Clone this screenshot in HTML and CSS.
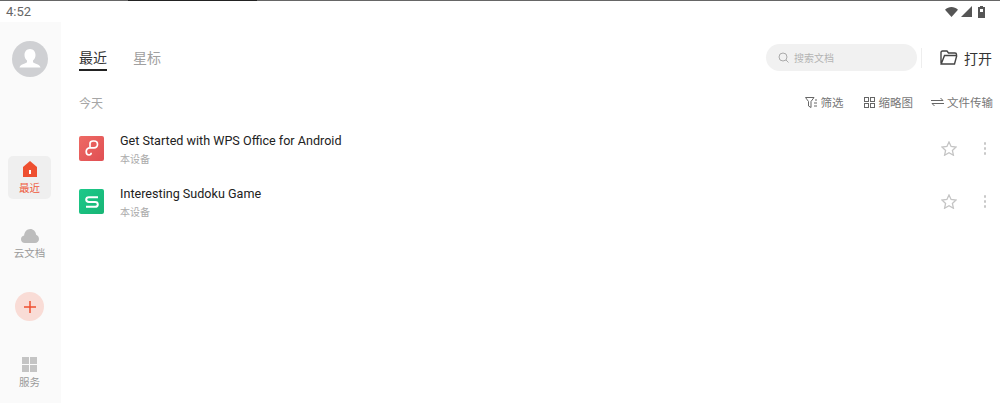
FILE: index.html
```html
<!DOCTYPE html>
<html lang="zh-CN">
<head>
    <meta charset="UTF-8">
    <meta name="viewport" content="width=device-width, initial-scale=1.0">
    <title>WPS Office</title>
    <link rel="stylesheet" href="styles.css">
</head>
<body>
    <div class="statusbar">
        <span class="clock">4:52</span>
        <div class="status-icons">
            <svg width="13" height="10" viewBox="0 0 13 10"><path d="M0 2.800C3.800 -.8 9.200 -.8 13 2.800L6.500 10Z" fill="#555"/></svg>
            <svg class="signal" width="11" height="11" viewBox="0 0 11 11"><path d="M11 0V11H0Z" fill="#555"/></svg>
            <svg width="7" height="12" viewBox="0 0 7 12"><path d="M2 0H5V1H7V12H0V1H2Z" fill="#555"/><rect x="2" y="3" width="3" height="3" fill="#fff"/></svg>
        </div>
    </div>
    <div class="app">
        <div class="sidebar">
            <div class="avatar">
                <svg width="36" height="36" viewBox="0 0 36 36"><circle cx="18" cy="18" r="18" fill="#cfd0d3"/><path d="M18 8c3.600 0 5.500 2.800 5.500 6 0 2.500-1 4.500-2.500 5.600v1.600c1.500 1.400 7 2 7.500 5.300H7.500c.5-3.300 6-3.900 7.500-5.300v-1.600c-1.500-1.100-2.500-3.100-2.500-5.600 0-3.200 1.900-6 5.500-6z" fill="#fff"/></svg>
            </div>
            <div class="nav-item active">
                <svg width="16" height="16" viewBox="0 0 16 16"><path d="M8 0L15 6V16H1V6Z" fill="#ee4f30"/><rect x="7" y="9" width="2" height="4" fill="#fff"/></svg>
                <span>最近</span>
            </div>
            <div class="nav-item cloud">
                <svg width="18" height="14" viewBox="0 0 18 14"><path d="M4 14C1.500 14 0 12.300 0 10.200 0 8.200 1.300 6.800 3.100 6.500 3.400 2.800 6 0 9.300 0c3 0 5.400 2.300 5.800 5.700 1.700.6 2.900 2.300 2.900 4.300 0 2.300-1.600 4-4 4z" fill="#bdbdbd"/></svg>
                <span>云文档</span>
            </div>
            <div class="add-btn">
                <svg width="14" height="14" viewBox="0 0 14 14"><path d="M7 1V13M1 7H13" stroke="#ee4f30" stroke-width="1.500"/></svg>
            </div>
            <div class="nav-item services">
                <svg width="15" height="15" viewBox="0 0 15 15"><g fill="#c4c4c4"><rect width="7" height="7"/><rect x="8" width="7" height="7"/><rect y="8" width="7" height="7"/><rect x="8" y="8" width="7" height="7"/></g></svg>
                <span>服务</span>
            </div>
        </div>
        <div class="main">
            <div class="topbar">
                <div class="tabs">
                    <span class="tab current">最近</span>
                    <span class="tab">星标</span>
                </div>
                <div class="top-right">
                    <div class="search">
                        <svg width="11" height="11" viewBox="0 0 11 11"><circle cx="5" cy="5" r="4" fill="none" stroke="#aaa"/><path d="M8 8L10.500 10.500" stroke="#aaa"/></svg>
                        <span>搜索文档</span>
                    </div>
                    <div class="open-btn">
                        <svg width="18" height="15" viewBox="0 0 18 15"><path d="M1 13.500V2.500C1 1.500 1.500 1 2.500 1H7L8.500 3H15C16 3 16.500 3.500 16.500 4.500V5.500H4.500L1.200 14H14.500L16.800 5.500" fill="none" stroke="#444" stroke-width="1.400"/></svg>
                        <span>打开</span>
                    </div>
                </div>
            </div>
            <div class="section-head">
                <span class="day">今天</span>
                <div class="tools">
                    <div class="tool filter">
                        <svg width="13" height="11" viewBox="0 0 13 11"><path d="M.5 .5H9L6 4.500V10.500L3.500 9V4.500Z M9 6H12M9 9H12M10 3H12" fill="none" stroke="#666"/></svg>
                        <span>筛选</span>
                    </div>
                    <div class="tool thumb">
                        <svg width="11" height="11" viewBox="0 0 11 11"><g fill="none" stroke="#666"><rect x=".5" y=".5" width="4" height="4"/><rect x="6.500" y=".5" width="4" height="4"/><rect x=".5" y="6.500" width="4" height="4"/><rect x="6.500" y="6.500" width="4" height="4"/></g></svg>
                        <span>缩略图</span>
                    </div>
                    <div class="tool">
                        <svg width="13" height="10" viewBox="0 0 13 10"><path d="M0 3.500H12L9.500 1M13 6.500H1L3.500 9" fill="none" stroke="#666"/></svg>
                        <span>文件传输</span>
                    </div>
                </div>
            </div>
            <div class="file-row">
                <div class="file-icon ppt">
                    <svg width="14" height="17" viewBox="0 0 14 17"><path d="M5 7V3.500C5 2 6.200 1 8 1H9C11.200 1 12.500 2.300 12.500 4.300 12.500 6.300 11.200 7.800 9 7.800H5C2.800 7.800 1.200 9.300 1.200 11.500 1.200 13.500 2.300 15 4 15 5.300 15 6.200 14 6.200 12.800" fill="none" stroke="#fff" stroke-width="1.700"/></svg>
                </div>
                <div class="file-info">
                    <div class="file-name">Get Started with WPS Office for Android</div>
                    <div class="file-loc">本设备</div>
                </div>
                <svg class="star" width="16" height="15" viewBox="0 0 16 15"><path d="M8 1L10.100 5.500 15 6.100 11.400 9.400 12.400 14.200 8 11.800 3.600 14.200 4.600 9.400 1 6.100 5.900 5.500Z" fill="none" stroke="#c4c4c4" stroke-width="1.300"/></svg>
                <div class="more"><i></i><i></i><i></i></div>
            </div>
            <div class="file-row">
                <div class="file-icon sheet">
                    <svg width="14" height="12" viewBox="0 0 14 12"><path d="M13 1.200H4C2.200 1.200 1.200 2.200 1.200 3.600 1.200 5 2.200 6 4 6H10C11.800 6 12.800 7 12.800 8.400 12.800 9.800 11.800 10.800 10 10.800H1" fill="none" stroke="#fff" stroke-width="2"/></svg>
                </div>
                <div class="file-info">
                    <div class="file-name">Interesting Sudoku Game</div>
                    <div class="file-loc">本设备</div>
                </div>
                <svg class="star" width="16" height="15" viewBox="0 0 16 15"><path d="M8 1L10.100 5.500 15 6.100 11.400 9.400 12.400 14.200 8 11.800 3.600 14.200 4.600 9.400 1 6.100 5.900 5.500Z" fill="none" stroke="#c4c4c4" stroke-width="1.300"/></svg>
                <div class="more"><i></i><i></i><i></i></div>
            </div>
        </div>
    </div>
</body>
</html>
```

FILE: styles.css
```css
html, body {
    height: 100%;
}
body {
    margin: 0;
    background: #fff;
    font-family: Roboto, "Noto Sans CJK SC", sans-serif;
    display: flex;
    flex-direction: column;
    overflow: hidden;
}
.statusbar {
    height: 22px;
    box-sizing: border-box;
    padding: 1px 15px 0 6px;
    background: linear-gradient(90deg, #666 128px, #222 128px, #222 257px, #666 257px) top / 100% 1px no-repeat;
    display: flex;
    justify-content: space-between;
    align-items: center;
    flex-shrink: 0;
}
.clock {
    font-size: 13px;
    color: #666;
}
.status-icons {
    display: flex;
    align-items: center;
    gap: 3px;
}
.signal {
    margin-right: 3px;
}
.app {
    flex: 1;
    display: flex;
    min-height: 0;
}
.sidebar {
    width: 61px;
    flex-shrink: 0;
    background: #fafafa;
    display: flex;
    flex-direction: column;
    align-items: center;
    padding: 19px 2px 0 0;
    box-sizing: border-box;
}
.avatar {
    height: 36px;
    margin-bottom: 79px;
}
.nav-item {
    width: 43px;
    height: 43px;
    display: flex;
    flex-direction: column;
    align-items: center;
    justify-content: center;
    gap: 2px;
    border-radius: 5px;
    font-size: 10.5px;
    color: #999;
}
.nav-item.active {
    background: #efefef;
    color: #ee5a3c;
    gap: 3px;
}
.nav-item.cloud {
    margin-top: 24px;
}
.add-btn {
    width: 29px;
    height: 29px;
    border-radius: 50%;
    background: #f9dcd6;
    display: flex;
    align-items: center;
    justify-content: center;
    margin-top: 26px;
}
.nav-item.services {
    margin-top: 30px;
}
.main {
    flex: 1;
    min-width: 0;
    padding: 0 8px 0 18px;
}
.topbar {
    height: 58px;
    display: flex;
    justify-content: space-between;
    align-items: center;
    padding-top: 13px;
    box-sizing: border-box;
}
.tabs {
    display: flex;
    gap: 26px;
    margin-top: 3px;
}
.tab {
    font-size: 14px;
    color: #a0a0a0;
    padding-bottom: 2px;
    border-bottom: 2px solid transparent;
}
.tab.current {
    color: #333;
    border-bottom-color: #222;
}
.top-right {
    display: flex;
    align-items: center;
}
.search {
    width: 151px;
    height: 27px;
    border-radius: 14px;
    background: #f1f1f1;
    display: flex;
    align-items: center;
    gap: 5px;
    padding-left: 12px;
    box-sizing: border-box;
    font-size: 10px;
    color: #b4b4b4;
}
.open-btn {
    display: flex;
    align-items: center;
    gap: 6px;
    margin-left: 4px;
    padding-left: 18px;
    border-left: 1px solid #eee;
    font-size: 14px;
    color: #333;
}
.section-head {
    height: 42px;
    box-sizing: border-box;
    padding-top: 2px;
    display: flex;
    justify-content: space-between;
    align-items: center;
}
.day {
    font-size: 12px;
    color: #a6a6a6;
}
.tools {
    display: flex;
    gap: 18px;
    margin-right: -1px;
}
.tool {
    display: flex;
    align-items: center;
    gap: 3px;
    font-size: 11.5px;
    color: #777;
}
.tool.filter {
    margin-right: 2px;
}
.tool.thumb {
    gap: 4px;
}
.file-row {
    height: 53px;
    display: flex;
    align-items: center;
}
.file-icon {
    width: 25px;
    height: 25px;
    border-radius: 2px;
    display: flex;
    align-items: center;
    justify-content: center;
    margin-right: 16px;
}
.file-icon.ppt {
    background: linear-gradient(135deg, #ee6a64, #e04f53);
}
.file-icon.sheet {
    background: linear-gradient(135deg, #1cc98a, #18b575);
}
.file-info {
    flex: 1;
    padding-top: 1px;
}
.file-name {
    font-size: 12.6px;
    color: #222;
    line-height: 18px;
}
.file-loc {
    font-size: 10px;
    color: #aaa;
    line-height: 14px;
    margin-top: 3px;
}
.more {
    width: 16px;
    margin: 0 -1px 0 20px;
    display: flex;
    flex-direction: column;
    align-items: center;
    gap: 2.5px;
}
.more i {
    width: 2.5px;
    height: 2.5px;
    border-radius: 50%;
    background: #c8c8c8;
}
```
